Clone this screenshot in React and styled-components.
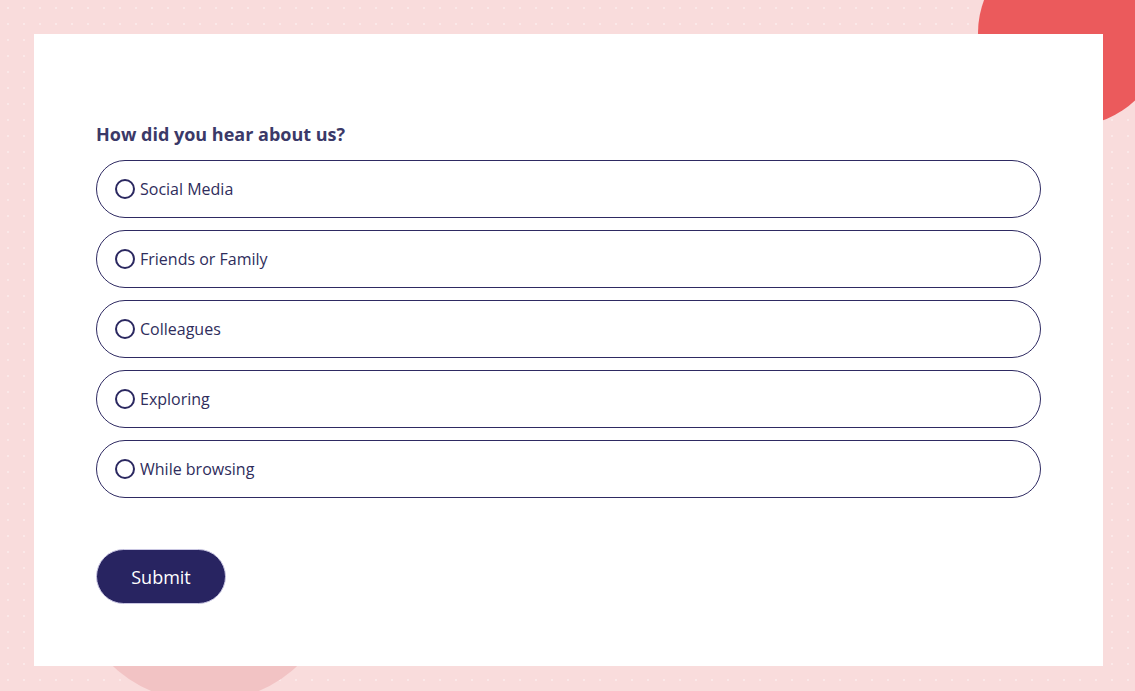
import React from "react";
import styled, { createGlobalStyle } from "styled-components";

const GlobalStyle = createGlobalStyle`
  * { box-sizing: border-box; }
  html, body {
    margin: 0;
    padding: 0;
    height: 100%;
  }
  body {
    background-color: #f9dcdc;
    font-family: "Open Sans", "Noto Sans", sans-serif;
    overflow: hidden;
  }
`;

const options = [
  "Social Media",
  "Friends or Family",
  "Colleagues",
  "Exploring",
  "While browsing",
];

export default function App() {
  return (
    <Page>
      <GlobalStyle />
      <Blob $top="-60px" $left="978px" $size="186px" $color="#eb5a5c" />
      <Blob $top="428px" $left="68px" $size="274px" $color="#f2c3c4" />

      <Card>
        <Question>How did you hear about us?</Question>

        <OptionList>
          {options.map((label) => (
            <Option key={label}>
              <Radio type="radio" name="source" value={label} />
              <span>{label}</span>
            </Option>
          ))}
        </OptionList>

        <SubmitButton type="button">Submit</SubmitButton>
      </Card>
    </Page>
  );
}

const Page = styled.div`
  position: relative;
  width: 100vw;
  height: 100vh;
  padding: 34px 32px 25px 34px;
  background-color: #f9dcdc;
  background-image: radial-gradient(rgba(255, 255, 255, 0.35) 1px, transparent 1.5px);
  background-size: 16px 16px;
  overflow: hidden;
`;

const Blob = styled.div`
  position: absolute;
  top: ${(p) => p.$top};
  left: ${(p) => p.$left};
  width: ${(p) => p.$size};
  height: ${(p) => p.$size};
  border-radius: 50%;
  background: ${(p) => p.$color};
`;

const Card = styled.div`
  position: relative;
  width: 1069px;
  height: 632px;
  background: #ffffff;
  padding: 87px 62px 0 62px;
  display: flex;
  flex-direction: column;
  align-items: flex-start;
`;

const Question = styled.h2`
  margin: 0 0 13px 0;
  font-size: 18px;
  line-height: 26px;
  font-weight: 700;
  color: #3b3968;
`;

const OptionList = styled.div`
  width: 945px;
  display: flex;
  flex-direction: column;
  gap: 12px;
`;

const Option = styled.label`
  height: 58px;
  display: flex;
  align-items: center;
  gap: 5px;
  padding: 0 18px;
  border: 1px solid #2e2a62;
  border-radius: 29px;
  font-size: 16px;
  color: #2f2d5c;
  cursor: pointer;
`;

const Radio = styled.input`
  appearance: none;
  margin: 0;
  width: 20px;
  height: 20px;
  border: 2px solid #2b2860;
  border-radius: 50%;
  background: #ffffff;
  flex-shrink: 0;

  &:checked {
    background: radial-gradient(#2b2860 40%, #ffffff 45%);
  }
`;

const SubmitButton = styled.button`
  margin-top: 51px;
  width: 130px;
  height: 55px;
  border: 1px solid #c9c6e2;
  border-radius: 28px;
  background: #282461;
  color: #ffffff;
  font-family: inherit;
  font-size: 18px;
  cursor: pointer;
`;
